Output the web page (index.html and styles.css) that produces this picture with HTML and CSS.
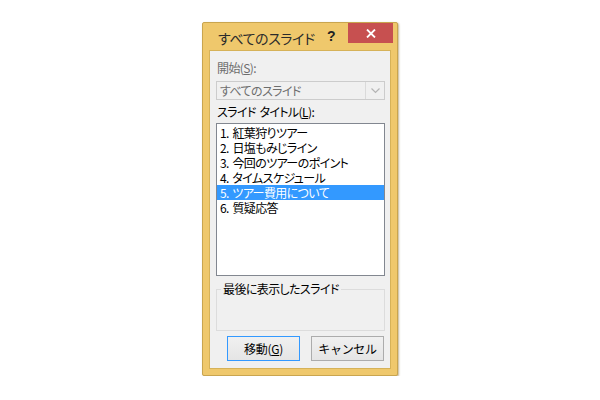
FILE: index.html
```html
<!DOCTYPE html>
<html lang="ja">
<head>
  <meta charset="UTF-8">
  <meta name="viewport" content="width=device-width, initial-scale=1.0">
  <title>すべてのスライド</title>
  <link rel="stylesheet" href="styles.css">
</head>
<body>
  <div class="dialog">
    <div class="titlebar">
      <span class="title">すべてのスライド</span>
      <span class="help">?</span>
      <span class="close">
        <svg width="10" height="9" viewBox="0 0 10 9">
          <path d="M1 0.5 L9 8.5 M9 0.5 L1 8.5" stroke="#fff" stroke-width="1.8" fill="none"/>
        </svg>
      </span>
    </div>
    <div class="client">
      <div class="label disabled">開始(<u>S</u>):</div>
      <div class="combo">
        <span class="combo-text">すべてのスライド</span>
        <span class="combo-btn">
          <svg width="9" height="6" viewBox="0 0 9 6">
            <polyline points="0.5,0.5 4.5,4.5 8.5,0.5" stroke="#b4b4b4" stroke-width="1.2" fill="none"/>
          </svg>
        </span>
      </div>
      <div class="label list-label">スライド タイトル(<u>L</u>):</div>
      <ul class="listbox">
        <li>1. 紅葉狩りツアー</li>
        <li>2. 日塩もみじライン</li>
        <li>3. 今回のツアーのポイント</li>
        <li>4. タイムスケジュール</li>
        <li class="selected">5. ツアー費用について</li>
        <li>6. 質疑応答</li>
      </ul>
      <div class="group">
        <span class="group-title">最後に表示したスライド</span>
      </div>
      <div class="buttons">
        <button class="btn default">移動(<u>G</u>)</button>
        <button class="btn">キャンセル</button>
      </div>
    </div>
  </div>
</body>
</html>
```

FILE: styles.css
```css
body {
  margin: 0;
  background-color: #ffffff;
  font-family: "Noto Sans CJK JP", "Noto Sans", sans-serif;
  font-feature-settings: "palt";
  font-size: 12px;
  letter-spacing: -0.6px;
  word-spacing: 1.5px;
  color: #000;
}
.dialog {
  width: 194px;
  margin: 22px auto 0;
  background-color: #efc86c;
  border: 1px solid #c9a54f;
  border-radius: 2px;
  box-shadow: 1px 1px 2px rgba(120, 90, 20, 0.45);
}
.titlebar {
  height: 27px;
  display: flex;
  align-items: flex-start;
}
.title {
  font-size: 14px;
  letter-spacing: -0.4px;
  line-height: 27px;
  color: #2b2b2b;
  padding-left: 15px;
  flex: 1;
  padding-top: 2px;
}
.help {
  font-family: "Liberation Sans", sans-serif;
  font-weight: bold;
  font-size: 14px;
  line-height: 20px;
  color: #222;
  margin-right: 13px;
  padding-top: 3px;
}
.close {
  width: 45px;
  height: 20px;
  background-color: #c75050;
  margin-right: 4px;
  display: flex;
  align-items: center;
  justify-content: center;
}
.client {
  margin: 0 6px 6px 6px;
  background-color: #f0f0f0;
  border: 1px solid #d6b258;
  padding: 9px 5px 7px 6px;
}
.label {
  line-height: 16px;
  padding-left: 1px;
}
.disabled {
  color: #6d6d6d;
}
.combo {
  margin-top: 5px;
  height: 19px;
  box-sizing: border-box;
  border: 1px solid #cccccc;
  display: flex;
  align-items: center;
}
.combo-text {
  flex: 1;
  color: #6d6d6d;
  padding-left: 3px;
  line-height: 17px;
}
.combo-btn {
  width: 19px;
  height: 17px;
  box-sizing: border-box;
  border-left: 1px solid #dadada;
  display: flex;
  align-items: center;
  justify-content: center;
}
.list-label {
  margin-top: 4px;
}
.listbox {
  list-style: none;
  margin: 3px 0 0 0;
  padding: 1px 0;
  height: 153px;
  box-sizing: border-box;
  background-color: #fff;
  border: 1px solid #828790;
}
.listbox li {
  height: 15px;
  line-height: 15px;
  padding-left: 3px;
  white-space: nowrap;
  overflow: hidden;
}
.listbox li.selected {
  background-color: #3399ff;
  color: #fff;
}
.group {
  margin-top: 13px;
  height: 42px;
  box-sizing: border-box;
  border: 1px solid #dcdcdc;
}
.group-title {
  display: inline-block;
  margin: -9px 0 0 4px;
  padding: 0 2px;
  line-height: 16px;
  background-color: #f0f0f0;
  vertical-align: top;
}
.buttons {
  margin-top: 5px;
  display: flex;
  justify-content: flex-end;
  gap: 11px;
  padding-right: 1px;
}
.btn {
  width: 73px;
  height: 25px;
  font-family: inherit;
  font-size: 12px;
  letter-spacing: -0.3px;
  color: #000;
  border: 1px solid #acacac;
  background: linear-gradient(#f0f0f0, #e5e5e5);
  padding: 0;
  border-radius: 0;
}
.btn.default {
  border-color: #3399ff;
}
```
